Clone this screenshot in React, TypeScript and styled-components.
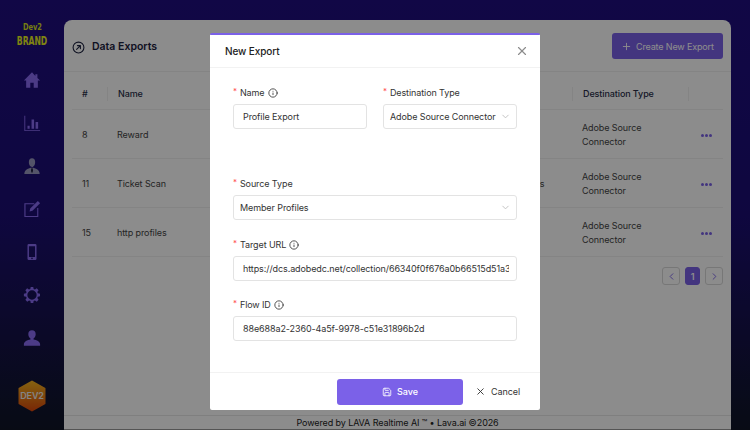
import React from 'react';
import styled, { createGlobalStyle } from 'styled-components';
import { Info, ChevronDown, X, Plus, Save, ChevronLeft, ChevronRight } from 'lucide-react';

const GlobalStyle = createGlobalStyle`
    html, body {
        margin: 0;
        height: 100%;
        overflow: hidden;
    }
    body {
        font-family: Inter, "Liberation Sans", sans-serif;
        letter-spacing: -0.1px;
    }
    * {
        box-sizing: border-box;
    }
`;

const Page = styled.div`
    position: relative;
    display: flex;
    width: 750px;
    height: 430px;
    overflow: hidden;
    background: linear-gradient(180deg, #1f0d80 0%, #1c0e74 50%, #0f1526 100%);
`;

const Sidebar = styled.nav`
    flex: none;
    width: 64px;
    display: flex;
    flex-direction: column;
    align-items: center;
    padding-top: 22px;
`;

const BrandTop = styled.div`
    font-family: "DejaVu Sans Condensed", "DejaVu Sans", sans-serif;
    font-size: 9px;
    font-weight: 700;
    line-height: 11px;
    color: #d8e21c;
    transform: scaleX(0.82);
`;

const BrandName = styled.div`
    font-family: "DejaVu Sans Condensed", "DejaVu Sans", sans-serif;
    font-size: 13px;
    font-weight: 700;
    line-height: 16px;
    color: #e8f020;
    margin-bottom: 22px;
    transform: scaleX(0.66);
`;

const NavList = styled.div`
    display: flex;
    flex-direction: column;
    gap: 25px;
    color: #8a6cf5;
`;

const NavIcon = styled.svg<{ $muted?: boolean }>`
    display: block;
    width: 18px;
    height: 18px;
    fill: currentColor;
    color: ${(p) => (p.$muted ? '#9a9abf' : 'inherit')};
`;

const Badge = styled.svg`
    display: block;
    width: 28px;
    height: 32px;
    margin-top: 33px;
`;

const BadgeText = styled.text`
    font-family: Inter, sans-serif;
    font-size: 9px;
    font-weight: 600;
    fill: #f0f0f0;
    text-anchor: middle;
`;

const Main = styled.div`
    flex: 1;
    display: flex;
    flex-direction: column;
    margin: 20px 19px 0 0;
    background: #fff;
    border-radius: 8px 8px 0 0;
    min-width: 0;
    border-bottom: 1px solid #999;
`;

const PanelHeader = styled.header`
    flex: none;
    height: 52px;
    display: flex;
    align-items: center;
    gap: 7px;
    padding: 1px 8px 0 8px;
    border-bottom: 1px solid #f0f0f0;
`;

const TitleIcon = styled.svg`
    display: block;
    width: 13px;
    height: 13px;
    margin-top: 2px;
    fill: none;
    stroke: #1d2240;
    stroke-width: 2;
    stroke-linecap: round;
    stroke-linejoin: round;
`;

const PanelTitle = styled.h1`
    flex: 1;
    margin: 0;
    font-size: 10.5px;
    font-weight: 600;
    letter-spacing: 0;
    color: #1d2240;
`;

const CreateButton = styled.button`
    display: flex;
    align-items: center;
    gap: 4px;
    height: 26px;
    width: 111px;
    padding: 0 0 0 9px;
    border: none;
    border-radius: 3px;
    background: #7b61e8;
    color: #fff;
    font: 400 9px Inter, sans-serif;
    letter-spacing: -0.15px;
    white-space: nowrap;
`;

const Table = styled.div`
    flex: none;
    margin: 0 8px;
    font-size: 9px;
`;

const Row = styled.div<{ $head?: boolean }>`
    display: grid;
    grid-template-columns: 35px 374px 91px 116px 35px;
    align-items: center;
    height: ${(p) => (p.$head ? '38px' : '49px')};
    padding-top: ${(p) => (p.$head ? '7px' : '2px')};
    border-bottom: 1px solid #f0f0f0;
    color: ${(p) => (p.$head ? '#2a2f4a' : '#444')};
    font-weight: ${(p) => (p.$head ? 500 : 400)};
`;

const Cell = styled.div`
    padding-left: 10px;
    line-height: 14px;
    white-space: nowrap;
`;

const HeadCell = styled(Cell)`
    border-left: 1px solid #f0f0f0;
`;

const Actions = styled.div`
    display: flex;
    justify-content: center;
    padding-left: 2px;
    gap: 1px;
`;

const Dot = styled.span`
    width: 3px;
    height: 3px;
    border-radius: 50%;
    background: #7b61e8;
`;

const Pager = styled.div`
    display: flex;
    justify-content: flex-end;
    gap: 5px;
    margin: 10px 8px 0;
`;

const PageButton = styled.div<{ $active?: boolean }>`
    width: ${(p) => (p.$active ? '15px' : '18px')};
    height: 18px;
    display: flex;
    align-items: center;
    justify-content: center;
    border-radius: 3px;
    border: 1px solid ${(p) => (p.$active ? '#7b61e8' : '#d9d9d9')};
    background: ${(p) => (p.$active ? '#7b61e8' : 'transparent')};
    color: ${(p) => (p.$active ? '#fff' : '#7b61e8')};
    font-size: 9px;
    font-weight: 600;
`;

const Footer = styled.footer`
    margin-top: auto;
    height: 14px;
    border-top: 1px solid #e8e8e8;
    font-size: 9px;
    line-height: 14px;
    text-align: center;
    color: #222;
`;

const Mask = styled.div`
    position: absolute;
    inset: 0;
    background: rgba(0, 0, 0, 0.45);
`;

const Modal = styled.section`
    position: absolute;
    left: 210px;
    top: 33px;
    width: 330px;
    height: 377px;
    display: flex;
    flex-direction: column;
    background: #fff;
    border-top: 2px solid #7b61e8;
    border-radius: 2px;
`;

const ModalHeader = styled.div`
    flex: none;
    height: 33px;
    display: flex;
    align-items: center;
    justify-content: space-between;
    padding: 0 11px 0 15px;
    border-bottom: 1px solid #f2f2f2;
    font-size: 10px;
    font-weight: 500;
    color: #222;
`;

const CloseButton = styled.div`
    display: flex;
    color: #8c8c8c;
`;

const Form = styled.div`
    flex: 1;
    display: flex;
    flex-direction: column;
    padding: 18px 23px 0;
`;

const FormRow = styled.div`
    display: grid;
    grid-template-columns: 134px 134px;
    gap: 16px;
`;

const Field = styled.div<{ $gap?: number }>`
    display: flex;
    flex-direction: column;
    margin-bottom: ${(p) => p.$gap ?? 0}px;
`;

const Label = styled.label`
    display: flex;
    align-items: center;
    gap: 3px;
    height: 13px;
    margin-bottom: 5px;
    font-size: 9px;
    color: #333;
`;

const Required = styled.span`
    color: #ff4d4f;
    font-size: 8px;
    position: relative;
    top: -2px;
`;

const TextInput = styled.input`
    height: 25px;
    width: 100%;
    padding: 0 7px 0 9px;
    border: 1px solid #e3e3e3;
    border-radius: 3px;
    font: 400 9px Inter, sans-serif;
    letter-spacing: -0.1px;
    color: #333;
    outline: none;
`;

const SelectBox = styled.div`
    height: 25px;
    display: flex;
    align-items: center;
    justify-content: space-between;
    padding: 0 5px 0 6px;
    border: 1px solid #e3e3e3;
    border-radius: 3px;
    font-size: 9px;
    color: #333;
    white-space: nowrap;
`;

const Chevron = styled(ChevronDown)`
    flex: none;
    color: #bfbfbf;
`;

const ModalFooter = styled.div`
    flex: none;
    height: 38px;
    display: flex;
    align-items: center;
    justify-content: flex-end;
    gap: 12px;
    padding: 0 20px 0 0;
    border-top: 1px solid #f2f2f2;
`;

const SaveButton = styled.button`
    width: 126px;
    height: 26px;
    display: flex;
    align-items: center;
    justify-content: center;
    gap: 5px;
    border: none;
    border-radius: 3px;
    background: #7b61e8;
    color: #fff;
    font: 500 9px Inter, sans-serif;
`;

const CancelButton = styled.div`
    display: flex;
    align-items: center;
    gap: 5px;
    font-size: 9px;
    color: #333;
`;

const rows = [
    { id: 8, name: 'Reward', source: 'Rewards' },
    { id: 11, name: 'Ticket Scan', source: 'Ticket Scans' },
    { id: 15, name: 'http profiles', source: 'Profiles' },
];

const App = () => (
    <Page>
        <GlobalStyle />
        <Sidebar>
            <BrandTop>Dev2</BrandTop>
            <BrandName>BRAND</BrandName>
            <NavList>
                <NavIcon viewBox="0 0 20 20"><path d="M10 1.500 1 10.500h2.500V18.500h4.600v-5.500h3.800v5.500h4.600v-8H19l-3-2.800V3.500h-2.300v2z" /></NavIcon>
                <NavIcon viewBox="0 0 20 20"><path d="M1.500 2h1v16h16.500v1H1.500zM5 13h2.400v3.500H5zM9.500 6h2.800v10.500H9.500zM14 9h2.800v7.500H14z" /></NavIcon>
                <NavIcon $muted viewBox="0 0 20 20">
                    <path d="M10 1.500c2.300 0 3.500 1.700 3.500 4.200 0 2.500-1.400 5.300-3.500 5.300S6.500 8.200 6.500 5.700c0-2.500 1.200-4.200 3.500-4.200z" />
                    <path d="M1.500 19c0-3.800 2.800-6 7-7h3c4.200 1 7 3.200 7 7z" />
                    <path d="M9.300 12.500h1.400l.4 3-1.100 2.500-1.100-2.500z" fill="#1a1a3a" />
                </NavIcon>
                <NavIcon viewBox="0 0 20 20"><path d="M1.500 3.500h11v1.200H2.800v13h13V9H17v10H1.500zM16.500 1l2.500 2.500-8.500 8.500-3.200.7.700-3.200z" /></NavIcon>
                <NavIcon viewBox="0 0 20 20"><path fillRule="evenodd" d="M6.500 1h7A1.500 1.500 0 0 1 15 2.500v15a1.500 1.500 0 0 1-1.500 1.500h-7A1.500 1.500 0 0 1 5 17.500v-15A1.500 1.500 0 0 1 6.500 1zm.1 2.500v12h6.800v-12zM10 16.200a.9.900 0 1 0 0 1.800.9.900 0 0 0 0-1.800z" /></NavIcon>
                <NavIcon viewBox="0 0 20 20"><path fillRule="evenodd" d="M8.600 1h2.800l.4 2.400 1.500.6 2-1.400 2 2-1.400 2 .6 1.500 2.400.4v3l-2.400.4-.6 1.500 1.400 2-2 2-2-1.400-1.500.6-.4 2.400H8.600l-.4-2.400-1.500-.6-2 1.400-2-2 1.400-2-.6-1.500L1 11.500v-3l2.400-.4.6-1.500-1.400-2 2-2 2 1.400 1.500-.6zM10 4.800a5.200 5.200 0 1 0 0 10.400 5.200 5.200 0 0 0 0-10.400z" /></NavIcon>
                <NavIcon viewBox="0 0 20 20"><path d="M10 1.500c2.600 0 4.100 1.800 4.100 4.400 0 2.100-1 3.900-2.400 4.700v1.100c3.500.7 7.300 2.200 7.300 5.300v1.500H1v-1.500c0-3.100 3.800-4.600 7.300-5.300v-1.100C6.900 9.800 5.900 8 5.900 5.900c0-2.600 1.500-4.400 4.100-4.400z" /></NavIcon>
            </NavList>
            <Badge viewBox="0 0 28 32">
                <defs>
                    <linearGradient id="badgeFill" x1="0" y1="0" x2="0" y2="1">
                        <stop offset="0" stopColor="#f2b01e" />
                        <stop offset="1" stopColor="#dc4a0c" />
                    </linearGradient>
                </defs>
                <path d="M14 1.500 26.500 8.500v15L14 30.500 1.500 23.500v-15z" fill="url(#badgeFill)" stroke="url(#badgeFill)" strokeWidth="2" strokeLinejoin="round" />
                <BadgeText x="14" y="19">DEV2</BadgeText>
            </Badge>
        </Sidebar>
        <Main>
            <PanelHeader>
                <TitleIcon viewBox="0 0 24 24">
                    <circle cx="12" cy="12" r="10" />
                    <path d="m8.500 15.500 7-7M10 8.500h5.500V14" />
                </TitleIcon>
                <PanelTitle>Data Exports</PanelTitle>
                <CreateButton><Plus size={11} />Create New Export</CreateButton>
            </PanelHeader>
            <Table>
                <Row $head>
                    <Cell>#</Cell>
                    <HeadCell>Name</HeadCell>
                    <HeadCell />
                    <HeadCell>Destination Type</HeadCell>
                    <HeadCell>&nbsp;</HeadCell>
                </Row>
                {rows.map((row) => (
                    <Row key={row.id}>
                        <Cell>{row.id}</Cell>
                        <Cell>{row.name}</Cell>
                        <Cell>{row.source}</Cell>
                        <Cell>Adobe Source<br />Connector</Cell>
                        <Actions><Dot /><Dot /><Dot /></Actions>
                    </Row>
                ))}
            </Table>
            <Pager>
                <PageButton><ChevronLeft size={11} /></PageButton>
                <PageButton $active>1</PageButton>
                <PageButton><ChevronRight size={11} /></PageButton>
            </Pager>
            <Footer>Powered by LAVA Realtime AI ™ • Lava.ai ©2026</Footer>
        </Main>
        <Mask />
        <Modal>
            <ModalHeader>
                New Export
                <CloseButton><X size={14} /></CloseButton>
            </ModalHeader>
            <Form>
                <FormRow>
                    <Field $gap={48}>
                        <Label><Required>*</Required>Name<Info size={10} /></Label>
                        <TextInput readOnly value="Profile Export" />
                    </Field>
                    <Field>
                        <Label><Required>*</Required>Destination Type</Label>
                        <SelectBox>Adobe Source Connector<Chevron size={11} /></SelectBox>
                    </Field>
                </FormRow>
                <Field $gap={18}>
                    <Label><Required>*</Required>Source Type</Label>
                    <SelectBox>Member Profiles<Chevron size={11} /></SelectBox>
                </Field>
                <Field $gap={17}>
                    <Label><Required>*</Required>Target URL<Info size={10} /></Label>
                    <TextInput readOnly value="https://dcs.adobedc.net/collection/66340f0f676a0b66515d51a3e" />
                </Field>
                <Field>
                    <Label><Required>*</Required>Flow ID<Info size={10} /></Label>
                    <TextInput readOnly value="88e688a2-2360-4a5f-9978-c51e31896b2d" />
                </Field>
            </Form>
            <ModalFooter>
                <SaveButton><Save size={10} />Save</SaveButton>
                <CancelButton><X size={11} />Cancel</CancelButton>
            </ModalFooter>
        </Modal>
    </Page>
);

export default App;
